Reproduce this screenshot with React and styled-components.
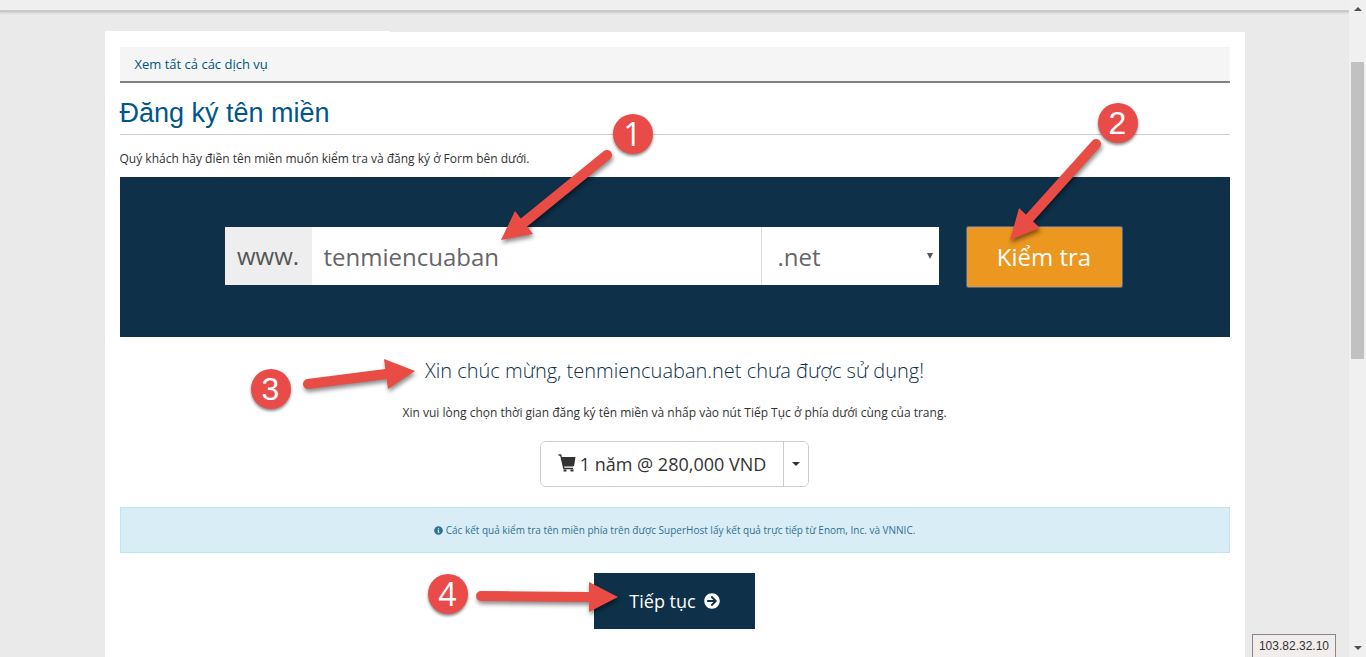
import React, { useState } from 'react';
import styled, { createGlobalStyle } from 'styled-components';
import { FaInfoCircle, FaArrowCircleRight } from 'react-icons/fa';

const GlobalStyle = createGlobalStyle`
    * {
        box-sizing: border-box;
    }
    body {
        margin: 0;
        background: #eaeaea;
        color: #333;
        font-family: "Open Sans", "Noto Sans", sans-serif;
        font-size: 12px;
        line-height: 20px;
    }
    button, input, select {
        font-family: inherit;
    }
`;

const Window = styled.div`
    display: flex;
    height: 100vh;
    overflow: hidden;
`;

const Page = styled.div`
    position: relative;
    flex: 1;
    min-width: 0;
    overflow: hidden;
`;

const TopBar = styled.header`
    height: 12px;
    background: #efefef;
    border-bottom: 2px solid #c8c8c8;
    box-shadow: 0 1px 2px rgba(0, 0, 0, 0.15);
`;

const Container = styled.main`
    position: relative;
    max-width: 1140px;
    min-height: 100vh;
    margin: 19px auto 0;
`;

const SideColumn = styled.div`
    width: 25%;
    height: 1px;
    background: #fff;
`;

const Content = styled.div`
    min-height: 100vh;
    padding: 15px;
    background: #fff;
`;

const Breadcrumb = styled.nav`
    padding: 7px 15px;
    background: #f5f5f5;
    border-bottom: 2px solid #808080;
    font-size: 13px;
    a {
        color: #005580;
        text-decoration: none;
    }
`;

const Title = styled.h1`
    margin: 12px 0 14px;
    padding-top: 1px;
    padding-bottom: 4px;
    border-bottom: 1px solid #ccc;
    color: #00568b;
    font-family: "Liberation Sans", Arial, sans-serif;
    font-size: 27px;
    font-weight: 400;
    line-height: 34px;
`;

const Intro = styled.p`
    margin: 0 0 8px;
`;

const SearchPanel = styled.form`
    display: flex;
    align-items: flex-start;
    gap: 28px;
    padding: 50px 108px 50px 105px;
    background: #0e3049;
`;

const DomainGroup = styled.div`
    display: flex;
    flex: 1;
    min-width: 0;
    height: 58px;
    color: #666;
    font-size: 24px;
    line-height: 32px;
`;

const Addon = styled.label`
    width: 87px;
    padding: 13px 0;
    background: #eee;
    color: #555;
    text-align: center;
`;

const DomainInput = styled.input`
    flex: 1;
    min-width: 0;
    padding: 0 12px;
    border: 0;
    outline: none;
    background: #fff;
    color: #666;
    font-size: 24px;
`;

const TldBox = styled.div`
    position: relative;
    width: 178px;
    border-left: 1px solid #ddd;
    svg {
        position: absolute;
        right: 6px;
        top: 26px;
        pointer-events: none;
    }
`;

const TldSelect = styled.select`
    appearance: none;
    width: 100%;
    height: 58px;
    padding: 0 16px;
    border: 0;
    border-radius: 0;
    background: #fff;
    color: #666;
    font-size: 24px;
`;

const CheckButton = styled.button`
    width: 155px;
    height: 60px;
    padding: 0 0 2px;
    border: 0;
    border-radius: 1px;
    outline: 1px solid #3a67ad;
    background: #ec971f;
    color: #fff;
    font-size: 24px;
    cursor: pointer;
`;

const Result = styled.section`
    padding: 20px 0;
    text-align: center;
    h2 {
        margin: 0 0 18px;
        color: #0e3049;
        font-size: 20px;
        font-weight: 300;
        line-height: 28px;
    }
    p {
        margin: 0 0 18px;
    }
`;

const PriceGroup = styled.div`
    display: inline-flex;
    height: 46px;
    vertical-align: top;
    border: 1px solid #ccc;
    border-radius: 6px;
    overflow: hidden;
`;

const PriceButton = styled.button`
    display: flex;
    align-items: center;
    justify-content: center;
    gap: 4px;
    padding: 0 17px;
    border: 0;
    background: #fff;
    color: #333;
    font-size: 18px;
    cursor: pointer;
`;

const CaretButton = styled(PriceButton)`
    width: 25px;
    padding: 0;
    border-left: 1px solid #ccc;
`;

const Notice = styled.div`
    display: flex;
    align-items: center;
    justify-content: center;
    gap: 3px;
    height: 46px;
    margin-bottom: 20px;
    border: 1px solid #bce8f1;
    background: #d9edf7;
    color: #31708f;
    font-size: 10px;
`;

const ContinueButton = styled.button`
    display: flex;
    align-items: center;
    justify-content: center;
    gap: 8px;
    width: 161px;
    height: 56px;
    margin: 0 auto;
    border: 0;
    background: #0e3049;
    color: #fff;
    font-size: 18px;
    cursor: pointer;
`;

const Arrows = styled.svg`
    position: absolute;
    top: 0;
    left: 0;
    width: 100%;
    height: 100%;
    overflow: visible;
    pointer-events: none;
    filter: drop-shadow(1px 3px 2px rgba(0, 0, 0, 0.45));
`;

const Badge = styled.span`
    position: absolute;
    left: ${props => props.$x}px;
    top: ${props => props.$y}px;
    width: 40px;
    height: 40px;
    border-radius: 50%;
    background: #e94b49;
    box-shadow: 0 2px 3px rgba(0, 0, 0, 0.45);
    color: #fff;
    font-family: ${props => props.$font}, sans-serif;
    font-size: 32px;
    line-height: 40px;
    text-align: center;
`;

const HostAddress = styled.div`
    position: absolute;
    right: 13px;
    bottom: -2px;
    padding: 1px 6px 2px;
    border: 1px solid #888;
    background: #f1eded;
    font-family: "Liberation Sans", Arial, sans-serif;
    font-size: 12px;
`;

const Scrollbar = styled.div`
    display: flex;
    flex-direction: column;
    justify-content: space-between;
    align-items: center;
    width: 17px;
    padding: 7px 0;
    background: #f0f0f0;
`;

const Track = styled.div`
    flex: 1;
    width: 13px;
    padding-top: 51px;
`;

const Thumb = styled.div`
    height: 297px;
    background: #c1c1c1;
`;

// tail point, two corners of the head, tip
const arrows = [
    { tail: [502, 124], left: [410, 180], right: [428, 203], tip: [396, 209] },
    { tail: [991, 113], left: [914, 177], right: [935, 197], tip: [905, 209] },
    { tail: [203, 353], left: [279, 328], right: [283, 358], tip: [310, 340] },
    { tail: [376, 565], left: [484, 551], right: [484, 581], tip: [513, 566] },
];

const badges = [
    { label: '1', x: 508, y: 83, font: '"Open Sans"' },
    { label: '2', x: 993, y: 72, font: '"Liberation Sans"' },
    { label: '3', x: 146, y: 338, font: '"Liberation Sans"' },
    { label: '4', x: 323, y: 543, font: '"Open Sans"' },
];

const CartIcon = () => (
    <svg width="18" height="20" viewBox="0 0 18 20" aria-hidden="true">
        <path d="M0.5 1h2.2l3.2 13.5H15" fill="none" stroke="#333" strokeWidth="1.4" strokeLinejoin="round" />
        <path d="M3 3H17.5L16.2 11.2 15 12.4H5.4z" fill="#333" />
        <path d="M5.5 15.5h3v2h-3zM12.5 15.5h3v2h-3z" fill="#333" />
    </svg>
);

const Triangle = ({ width, height, color, up }) => (
    <svg width={width} height={height} viewBox="0 0 10 10" preserveAspectRatio="none" aria-hidden="true">
        <path d={up ? 'M0 10h10L5 0z' : 'M0 0h10L5 10z'} fill={color} />
    </svg>
);

const Arrow = ({ tail, left, right, tip }) => {
    const baseX = (left[0] + right[0]) / 2;
    const baseY = (left[1] + right[1]) / 2;
    return (
        <g>
            <path d={`M${tail} L${baseX},${baseY}`} stroke="#e94b45" strokeWidth="10" strokeLinecap="round" />
            <path d={`M${left} L${right} L${tip}z`} fill="#e94b45" />
        </g>
    );
};

const App = () => {
    const [domain, setDomain] = useState('tenmiencuaban');
    const [tld, setTld] = useState('.net');

    return (
        <Window>
            <GlobalStyle />
            <Page>
                <TopBar />
                <Container>
                    <SideColumn />
                    <Content>
                        <Breadcrumb><a href="#services">Xem tất cả các dịch vụ</a></Breadcrumb>
                        <Title>Đăng ký tên miền</Title>
                        <Intro>Quý khách hãy điền tên miền muốn kiểm tra và đăng ký ở Form bên dưới.</Intro>
                        <SearchPanel onSubmit={(e) => { e.preventDefault() }}>
                            <DomainGroup>
                                <Addon htmlFor="domain">www.</Addon>
                                <DomainInput id="domain" type="text" value={domain} onChange={(e) => setDomain(e.target.value)} />
                                <TldBox>
                                    <TldSelect aria-label="Đuôi tên miền" value={tld} onChange={(e) => setTld(e.target.value)}>
                                        <option>.net</option>
                                        <option>.com</option>
                                        <option>.vn</option>
                                    </TldSelect>
                                    <Triangle width={6} height={6} color="#555" />
                                </TldBox>
                            </DomainGroup>
                            <CheckButton type="submit">Kiểm tra</CheckButton>
                        </SearchPanel>
                        <Result>
                            <h2>Xin chúc mừng, tenmiencuaban.net chưa được sử dụng!</h2>
                            <p>Xin vui lòng chọn thời gian đăng ký tên miền và nhấp vào nút Tiếp Tục ở phía dưới cùng của trang.</p>
                            <PriceGroup>
                                <PriceButton type="button"><CartIcon />1 năm @ 280,000 VND</PriceButton>
                                <CaretButton type="button" aria-label="Chọn thời gian">
                                    <Triangle width={8} height={4} color="#333" />
                                </CaretButton>
                            </PriceGroup>
                        </Result>
                        <Notice>
                            <FaInfoCircle size={9} />
                            Các kết quả kiểm tra tên miền phía trên được SuperHost lấy kết quả trực tiếp từ Enom, Inc. và VNNIC.
                        </Notice>
                        <ContinueButton type="button">Tiếp tục <FaArrowCircleRight size={16} /></ContinueButton>
                    </Content>
                    <Arrows aria-hidden="true">
                        {arrows.map((arrow, i) => <Arrow key={i} {...arrow} />)}
                    </Arrows>
                    {badges.map(({ label, x, y, font }) => (
                        <Badge key={label} $x={x} $y={y} $font={font}>{label}</Badge>
                    ))}
                </Container>
                <HostAddress>103.82.32.10</HostAddress>
            </Page>
            <Scrollbar aria-hidden="true">
                <Triangle width={8} height={4} color="#505050" up />
                <Track><Thumb /></Track>
                <Triangle width={8} height={4} color="#505050" />
            </Scrollbar>
        </Window>
    );
}

export default App;
